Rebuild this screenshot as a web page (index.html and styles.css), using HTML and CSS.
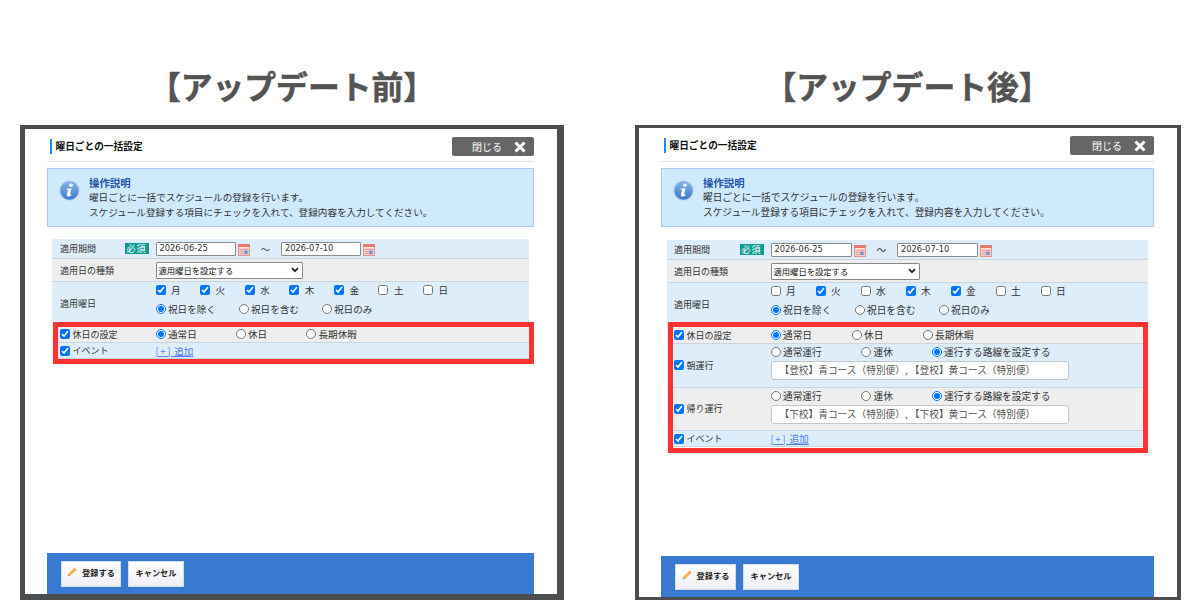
FILE: index.html
```html
<!DOCTYPE html>
<html lang="ja">
<head>
  <meta charset="UTF-8" />
  <meta name="viewport" content="width=device-width, initial-scale=1.0"/>
  <title>曜日ごとの一括設定</title>
  <link rel="stylesheet" href="styles.css">
</head>
<body>
  <svg width="0" height="0" class="defs">
    <defs>
      <linearGradient id="ball" x1="0" y1="0" x2="0" y2="1">
        <stop offset="0" stop-color="#86b5e8"/>
        <stop offset="1" stop-color="#3a78cf"/>
      </linearGradient>
      <symbol id="info" viewBox="0 0 20 20">
        <circle cx="10" cy="10" r="9.6" fill="#b4c9e2"/>
        <circle cx="10" cy="10" r="8.7" fill="url(#ball)"/>
        <circle cx="11.5" cy="5" r="1.7" fill="#fff"/>
        <path d="M7.4 8h4.600l-1.700 6 1.700-.5-.3 1.300c-1.600 1.200-4.900 1.400-4.200-.8l1.200-4.600H7.200z" fill="#fff"/>
      </symbol>
      <symbol id="calendar" viewBox="0 0 12 12">
        <rect x=".5" y=".5" width="11" height="11" fill="#fbe3df" stroke="#e2948b"/>
        <rect x="0" y="0" width="12" height="3" fill="#e57c70"/>
        <path d="M1 5.500h10M1 7.500h10M1 9.500h10M3 4v7M5 4v7M7 4v7M9 4v7" stroke="#e79a90" stroke-width=".7"/>
        <rect x="6.500" y="6.500" width="3" height="3.500" fill="#5d9be0"/>
      </symbol>
      <symbol id="pencil" viewBox="0 0 10 10">
        <path d="M.7 9.300l.8-2.700L7.300.9l2 2L3.500 8.600z" fill="#f7b04a"/>
        <path d="M6.300 1.900L7.500.7l2 2-1.200 1.200z" fill="#f0a080"/>
        <path d="M.7 9.300l.5-1.600 1.100 1.100z" fill="#8a6a4a"/>
      </symbol>
      <symbol id="chevron" viewBox="0 0 8 6">
        <path d="M1 1.200l3 3 3-3" fill="none" stroke="#222" stroke-width="1.700"/>
      </symbol>
      <symbol id="cross" viewBox="0 0 12 12">
        <path d="M1.500 1.500l9 9M10.500 1.500l-9 9" stroke="#fff" stroke-width="3"/>
      </symbol>
    </defs>
  </svg>

  <section class="panel before">
    <h1>【アップデート前】</h1>
    <div class="frame">
      <div class="dialog-head">
        <h2>曜日ごとの一括設定</h2>
        <div class="close">閉じる<svg><use href="#cross"/></svg></div>
      </div>
      <div class="info">
        <svg><use href="#info"/></svg>
        <div>
          <h3>操作説明</h3>
          <p>曜日ごとに一括でスケジュールの登録を行います。</p>
          <p>スケジュール登録する項目にチェックを入れて、登録内容を入力してください。</p>
        </div>
      </div>
      <div class="form">
        <div class="row period">
          <div class="name">適用期間<span class="required">必須</span></div>
          <div class="value dates">
            <span class="date">2026-06-25</span><svg><use href="#calendar"/></svg>
            <span class="tilde">～</span>
            <span class="date">2026-07-10</span><svg><use href="#calendar"/></svg>
          </div>
        </div>
        <div class="row gray kind">
          <div class="name">適用日の種類</div>
          <div class="value"><div class="select">適用曜日を設定する<svg><use href="#chevron"/></svg></div></div>
        </div>
        <div class="row weekdays">
          <div class="name">適用曜日</div>
          <div class="value">
            <div class="days">
              <label><input type="checkbox" checked>月</label>
              <label><input type="checkbox" checked>火</label>
              <label><input type="checkbox" checked>水</label>
              <label><input type="checkbox" checked>木</label>
              <label><input type="checkbox" checked>金</label>
              <label><input type="checkbox">土</label>
              <label><input type="checkbox">日</label>
            </div>
            <div class="options holiday">
              <label><input type="radio" name="b1" checked>祝日を除く</label>
              <label><input type="radio" name="b1">祝日を含む</label>
              <label><input type="radio" name="b1">祝日のみ</label>
            </div>
          </div>
        </div>
        <div class="row gray off">
          <div class="name check"><input type="checkbox" checked>休日の設定</div>
          <div class="value options type">
            <label><input type="radio" name="b2" checked>通常日</label>
            <label><input type="radio" name="b2">休日</label>
            <label><input type="radio" name="b2">長期休暇</label>
          </div>
        </div>
        <div class="row event">
          <div class="name check"><input type="checkbox" checked>イベント</div>
          <div class="value"><a><span class="plus">[+]</span> 追加</a></div>
        </div>
        <div class="highlight"></div>
      </div>
      <div class="actions">
        <div class="btn"><svg><use href="#pencil"/></svg>登録する</div>
        <div class="btn cancel">キャンセル</div>
      </div>
    </div>
  </section>

  <section class="panel after">
    <h1>【アップデート後】</h1>
    <div class="frame">
      <div class="dialog-head">
        <h2>曜日ごとの一括設定</h2>
        <div class="close">閉じる<svg><use href="#cross"/></svg></div>
      </div>
      <div class="info">
        <svg><use href="#info"/></svg>
        <div>
          <h3>操作説明</h3>
          <p>曜日ごとに一括でスケジュールの登録を行います。</p>
          <p>スケジュール登録する項目にチェックを入れて、登録内容を入力してください。</p>
        </div>
      </div>
      <div class="form">
        <div class="row period">
          <div class="name">適用期間<span class="required">必須</span></div>
          <div class="value dates">
            <span class="date">2026-06-25</span><svg><use href="#calendar"/></svg>
            <span class="tilde">～</span>
            <span class="date">2026-07-10</span><svg><use href="#calendar"/></svg>
          </div>
        </div>
        <div class="row gray kind">
          <div class="name">適用日の種類</div>
          <div class="value"><div class="select">適用曜日を設定する<svg><use href="#chevron"/></svg></div></div>
        </div>
        <div class="row weekdays">
          <div class="name">適用曜日</div>
          <div class="value">
            <div class="days">
              <label><input type="checkbox">月</label>
              <label><input type="checkbox" checked>火</label>
              <label><input type="checkbox">水</label>
              <label><input type="checkbox" checked>木</label>
              <label><input type="checkbox" checked>金</label>
              <label><input type="checkbox">土</label>
              <label><input type="checkbox">日</label>
            </div>
            <div class="options holiday">
              <label><input type="radio" name="a1" checked>祝日を除く</label>
              <label><input type="radio" name="a1">祝日を含む</label>
              <label><input type="radio" name="a1">祝日のみ</label>
            </div>
          </div>
        </div>
        <div class="row gray off">
          <div class="name check"><input type="checkbox" checked>休日の設定</div>
          <div class="value options type">
            <label><input type="radio" name="a2" checked>通常日</label>
            <label><input type="radio" name="a2">休日</label>
            <label><input type="radio" name="a2">長期休暇</label>
          </div>
        </div>
        <div class="row route">
          <div class="name check"><input type="checkbox" checked>朝運行</div>
          <div class="value">
            <div class="options service">
              <label><input type="radio" name="a3">通常運行</label>
              <label><input type="radio" name="a3">運休</label>
              <label><input type="radio" name="a3" checked>運行する路線を設定する</label>
            </div>
            <div class="courses">【登校】青コース（特別便）, 【登校】黄コース（特別便）</div>
          </div>
        </div>
        <div class="row gray route">
          <div class="name check"><input type="checkbox" checked>帰り運行</div>
          <div class="value">
            <div class="options service">
              <label><input type="radio" name="a4">通常運行</label>
              <label><input type="radio" name="a4">運休</label>
              <label><input type="radio" name="a4" checked>運行する路線を設定する</label>
            </div>
            <div class="courses">【下校】青コース（特別便）, 【下校】黄コース（特別便）</div>
          </div>
        </div>
        <div class="row event">
          <div class="name check"><input type="checkbox" checked>イベント</div>
          <div class="value"><a><span class="plus">[+]</span> 追加</a></div>
        </div>
        <div class="highlight"></div>
      </div>
      <div class="actions">
        <div class="btn"><svg><use href="#pencil"/></svg>登録する</div>
        <div class="btn cancel">キャンセル</div>
      </div>
    </div>
  </section>
</body>
</html>
```
FILE: styles.css
```css
* {
  box-sizing: border-box;
}

body {
  margin: 0;
  height: 600px;
  padding: 0 19px 0 20px;
  display: flex;
  justify-content: space-between;
  background: #fff;
  color: #333;
  font-family: "Noto Sans CJK JP", sans-serif;
  font-size: 9.6px;
  overflow: hidden;
}

.defs {
  position: absolute;
}

h1, h2, h3, p {
  margin: 0;
}

svg {
  display: block;
  flex-shrink: 0;
}

.panel {
  width: 544px;
  display: flex;
  flex-direction: column;
}

.panel.after {
  width: 546px;
  font-size: 9.7px;
}

h1 {
  height: 125px;
  padding-top: 61px;
  line-height: 48px;
  font-size: 31.8px;
  font-weight: 700;
  color: #545454;
  text-align: center;
  white-space: nowrap;
  -webkit-text-stroke: 0.5px #545454;
}

.frame {
  height: 474.5px;
  border: 4px solid #4c4e4f;
  border-width: 4px 7px 6.5px 5px;
  padding: 8px 23px 0 22px;
  display: flex;
  flex-direction: column;
}

.after h1 {
  padding-right: 1px;
}

.after .frame {
  border-width: 3px 4px 3px 4px;
  padding: 8px 23px 0 22px;
}

.dialog-head {
  height: 25px;
  display: flex;
  justify-content: space-between;
  align-items: flex-start;
  border-bottom: 1px solid #e2e2e2;
}

.after .dialog-head {
  height: 26px;
}

h2 {
  height: 15px;
  margin: 2px 0 0 3px;
  padding-left: 3.5px;
  border-left: 2.5px solid #1b8cf0;
  line-height: 14px;
  font-size: 9.7px;
  color: #111;
}

.close {
  width: 82.5px;
  height: 19px;
  padding-right: 8px;
  display: flex;
  justify-content: flex-end;
  align-items: center;
  gap: 12px;
  border-radius: 2px;
  background: #666;
  color: #fff;
  font-size: 10px;
}

.after .close {
  width: 84px;
}

.close svg {
  width: 12px;
  height: 12px;
}

.info {
  height: 59px;
  margin-top: 6px;
  padding: 6px 0 0 11px;
  display: flex;
  gap: 9px;
  border: 1px solid #b0c8f4;
  background: #cfe9fd;
}

.info svg {
  width: 21px;
  height: 21px;
  margin-top: 5px;
}

.info h3 {
  line-height: 15px;
  font-size: 10.4px;
  color: #2455ae;
}

.info p {
  line-height: 15px;
  white-space: nowrap;
}

.form {
  position: relative;
  margin: 12px 5px 0;
}

.after .form {
  margin: 13px 6px 0;
}

.row {
  display: flex;
  align-items: center;
  background: #deedfa;
  border-bottom: 1px solid #c9d5df;
}

.row.gray {
  background: #eee;
}

.name {
  width: 103.5px;
  padding: 0 7px 0 8px;
  display: flex;
  align-items: center;
  justify-content: space-between;
  flex-shrink: 0;
  font-size: 9px;
}

.after .name {
  padding-left: 7px;
}

.name.check {
  justify-content: flex-start;
  gap: 2.5px;
}

.required {
  width: 24px;
  height: 11px;
  background: #0f9b94;
  color: #fff;
  font: 9px/11px "Noto Sans CJK JP", serif;
  letter-spacing: 1px;
  text-align: center;
}

.period { height: 20px; }
.kind { height: 23px; }
.weekdays { height: 44px; }
.off { height: 17px; }
.event { height: 16px; }
.route { height: 43.5px; }

.dates {
  display: flex;
  align-items: center;
}

.date {
  width: 80px;
  height: 14px;
  padding-left: 3px;
  border: 1px solid #8c8c8c;
  border-radius: 1px;
  background: #fff;
  font: 8.3px/11px "DejaVu Sans", sans-serif;
}

.after .date {
  width: 81px;
}

.dates svg {
  width: 12px;
  height: 12px;
  margin: 2px 0 0 2px;
}

.tilde {
  width: 31.5px;
  text-align: center;
}

.select {
  width: 147.5px;
  height: 17px;
  padding: 0 3px 0 2px;
  display: flex;
  align-items: center;
  justify-content: space-between;
  border: 1px solid #888;
  border-radius: 1px;
  background: #fff;
  color: #111;
  font-size: 8.3px;
  line-height: 12px;
}

.after .select {
  width: 149px;
}

.select svg {
  width: 8px;
  height: 6px;
}

input {
  width: 10px;
  height: 10px;
  margin: 0;
  flex-shrink: 0;
  accent-color: #0075ff;
}

label {
  display: flex;
  align-items: center;
  gap: 2.5px;
  line-height: 16px;
  white-space: nowrap;
}

.weekdays .value {
  align-self: flex-start;
}

.days {
  display: grid;
  grid-template-columns: repeat(7, 44.6px);
}

.after .days {
  grid-template-columns: repeat(7, 45px);
}

.days label {
  gap: 5.5px;
}

.options {
  display: grid;
}

.options.holiday {
  margin-top: 3px;
  grid-template-columns: 83px 83px auto;
}

.options.type {
  grid-template-columns: 80px 70.5px auto;
}

.options.service {
  grid-template-columns: 90.5px 70.5px auto;
}

.after .options.holiday {
  grid-template-columns: 84px 84px auto;
}

.after .options.type {
  grid-template-columns: 81px 71px auto;
}

.route .value {
  align-self: flex-start;
}

.courses {
  width: 298.5px;
  height: 19px;
  margin-top: 1px;
  padding-left: 8px;
  border: 1px solid #c4c8cb;
  border-radius: 3px;
  background: #fff;
  color: #555;
  line-height: 16px;
  white-space: nowrap;
}

a {
  color: #4f7dff;
  text-decoration: underline;
}

.plus {
  letter-spacing: 1.6px;
}

/* red frame round the items that differ */
.highlight {
  position: absolute;
  left: 1px;
  right: -5px;
  top: 83px;
  height: 42px;
  border: 5px solid #ff3131;
}

.after .highlight {
  right: 0;
  top: 82px;
  height: 131px;
}

.actions {
  height: 41px;
  margin-top: auto;
  padding: 8px 14px;
  display: flex;
  align-items: flex-start;
  gap: 7px;
  background: #3879d1;
}

.btn {
  width: 60px;
  height: 26px;
  padding-bottom: 4px;
  display: flex;
  align-items: center;
  justify-content: center;
  gap: 5px;
  border: 1px solid #d5dbe4;
  background: linear-gradient(#fff, #edeff4);
  color: #222;
  font-size: 8.2px;
  font-weight: 700;
}

.after .btn {
  width: 61px;
}

.btn.cancel,
.after .btn.cancel {
  width: 56px;
}

.btn svg {
  width: 10px;
  height: 10px;
}
```
